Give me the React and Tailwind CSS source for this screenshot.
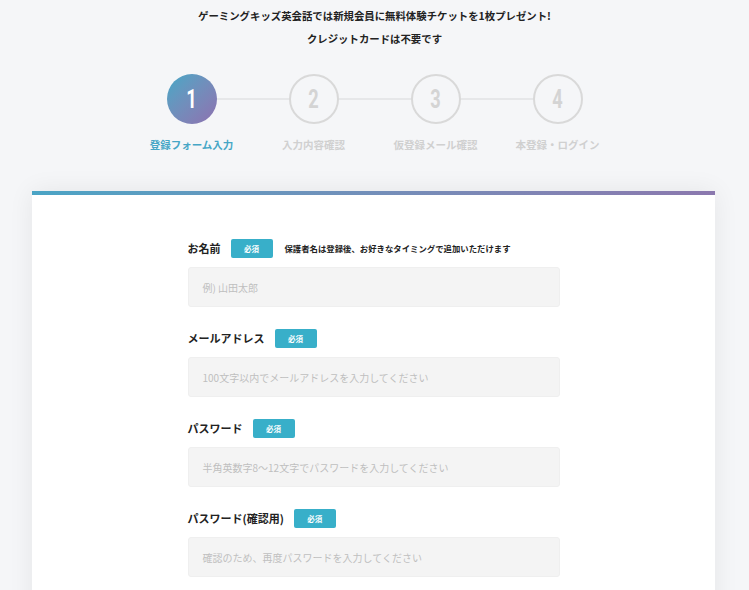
import React from "react";

const steps = [
  { n: "1", label: "登録フォーム入力", active: true },
  { n: "2", label: "入力内容確認" },
  { n: "3", label: "仮登録メール確認" },
  { n: "4", label: "本登録・ログイン" },
];

const fields = [
  { label: "お名前", note: "保護者名は登録後、お好きなタイミングで追加いただけます", ph: "例) 山田太郎" },
  { label: "メールアドレス", ph: "100文字以内でメールアドレスを入力してください" },
  { label: "パスワード", ph: "半角英数字8～12文字でパスワードを入力してください" },
  { label: "パスワード(確認用)", ph: "確認のため、再度パスワードを入力してください" },
];

export default function App() {
  return (
    <div
      className="min-h-screen bg-[#f5f6f8] text-[#222]"
      style={{ fontFamily: '"Noto Sans CJK JP", "Noto Sans", sans-serif' }}
    >
      <div className="pt-[8px] text-center text-[10.4px] font-bold leading-[16px]">
        <p>ゲーミングキッズ英会話では新規会員に無料体験チケットを1枚プレゼント!</p>
        <p className="mt-[7px]">クレジットカードは不要です</p>
      </div>

      <div className="mt-[27px] flex justify-center">
        <div className="relative grid w-[488px] grid-cols-4">
          <div className="absolute left-[61px] right-[61px] top-[24px] h-[2px] bg-[#e6e7e9]" />
          {steps.map((s) => (
            <div key={s.n} className="relative flex flex-col items-center">
              {s.active ? (
                <div className="flex h-[50px] w-[50px] items-center justify-center rounded-full bg-linear-to-br from-[#3fa8c6] to-[#8c70b0]">
                  <span
                    className="inline-block scale-x-[0.7] text-[26px] font-bold text-white"
                    style={{ fontFamily: '"Roboto", "Liberation Sans", sans-serif' }}
                  >
                    {s.n}
                  </span>
                </div>
              ) : (
                <div className="flex h-[50px] w-[50px] items-center justify-center rounded-full border-2 border-[#d9d9d9] bg-[#f5f6f8]">
                  <span
                    className="inline-block scale-x-[0.7] text-[26px] font-bold text-[#d4d4d4]"
                    style={{ fontFamily: '"Roboto", "Liberation Sans", sans-serif' }}
                  >
                    {s.n}
                  </span>
                </div>
              )}
              <span
                className={`mt-[14px] text-[10.5px] font-bold leading-[14px] whitespace-nowrap ${
                  s.active ? "text-[#46a6c6]" : "text-[#d0d0d0]"
                }`}
              >
                {s.label}
              </span>
            </div>
          ))}
        </div>
      </div>

      <div className="ml-[32px] mr-[34px] mt-[39px] bg-white shadow-[0_0_24px_rgba(0,0,0,0.07)]">
        <div className="h-[4px] bg-linear-to-r from-[#4aa4c5] to-[#8b78ae]" />
        <div className="mx-auto w-[372px] pt-[44px] pb-[20px]">
          {fields.map((f) => (
            <div key={f.label} className="mb-[22px]">
              <div className="flex h-[19px] items-center">
                <span className="text-[11px] font-bold leading-none">{f.label}</span>
                <span className="ml-[10px] flex h-[19px] w-[42px] items-center justify-center rounded-[2px] bg-[#38afc9] text-[7.5px] font-bold text-white">
                  必須
                </span>
                {f.note && (
                  <span className="ml-[12px] text-[8.4px] font-bold leading-none whitespace-nowrap">{f.note}</span>
                )}
              </div>
              <div className="mt-[9px] flex h-[40px] items-center rounded-[3px] border border-[#efefef] bg-[#f4f4f4] pl-[14px] text-[10px] text-[#bfbfbf]">
                {f.ph}
              </div>
            </div>
          ))}
        </div>
      </div>
    </div>
  );
}
